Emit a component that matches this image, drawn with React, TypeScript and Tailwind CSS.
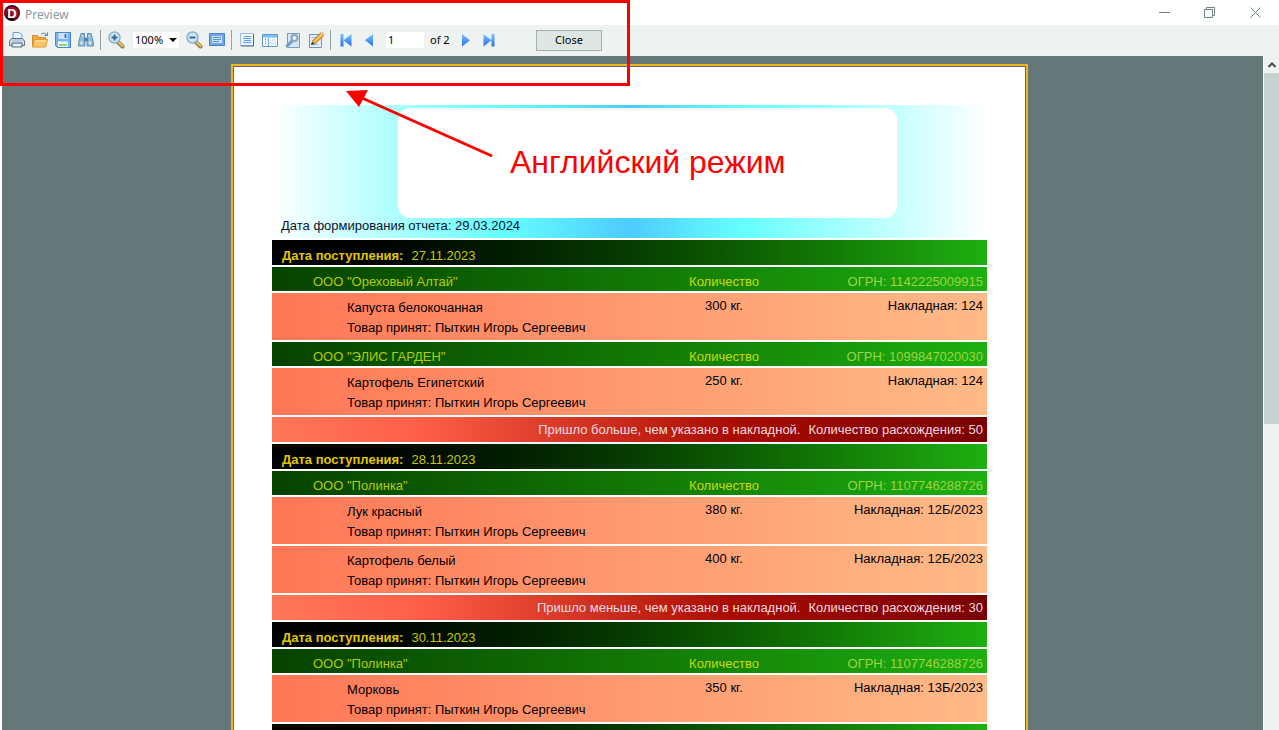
import React from 'react';

type Row =
    | { kind: 'date'; date: string }
    | { kind: 'org'; name: string; ogrn: string }
    | { kind: 'item'; name: string; qty: string; invoice: string }
    | { kind: 'diff'; text: string; count: number }
    | { kind: 'empty' };

const rows: Row[] = [
    { kind: 'date', date: '27.11.2023' },
    { kind: 'org', name: 'ООО "Ореховый Алтай"', ogrn: '1142225009915' },
    { kind: 'item', name: 'Капуста белокочанная', qty: '300 кг.', invoice: '124' },
    { kind: 'org', name: 'ООО "ЭЛИС ГАРДЕН"', ogrn: '1099847020030' },
    { kind: 'item', name: 'Картофель Египетский', qty: '250 кг.', invoice: '124' },
    { kind: 'diff', text: 'Пришло больше, чем указано в накладной.', count: 50 },
    { kind: 'date', date: '28.11.2023' },
    { kind: 'org', name: 'ООО "Полинка"', ogrn: '1107746288726' },
    { kind: 'item', name: 'Лук красный', qty: '380 кг.', invoice: '12Б/2023' },
    { kind: 'item', name: 'Картофель белый', qty: '400 кг.', invoice: '12Б/2023' },
    { kind: 'diff', text: 'Пришло меньше, чем указано в накладной.', count: 30 },
    { kind: 'date', date: '30.11.2023' },
    { kind: 'org', name: 'ООО "Полинка"', ogrn: '1107746288726' },
    { kind: 'item', name: 'Морковь', qty: '350 кг.', invoice: '13Б/2023' },
    { kind: 'empty' },
];

const Icon = ({ children }: { children: React.ReactNode }) => (
    <svg width="18" height="18" viewBox="0 0 18 18" fill="none" aria-hidden="true">
        {children}
    </svg>
);

const PrintIcon = () => (
    <Icon>
        <path d="M5 8V1.5h6.5L14 4v4z" fill="#e6f2ff" stroke="#6b9fe0" />
        <path d="M3.5 7.5h11l2 2.5v4.5h-15V10z" fill="#d3dbe0" stroke="#66767e" />
        <path d="M5 8h8l1 2.5H4z" fill="#a9c8ee" />
        <path d="M4 12h10v4H4z" fill="#c0e6fa" stroke="#5c6b73" />
        <path d="M5.5 14h7" stroke="#fff" />
    </Icon>
);

const OpenIcon = () => (
    <Icon>
        <path d="M1.5 15.5v-11h5l1.5 2h6.5v9z" fill="#f0ac40" stroke="#d08c2c" />
        <path d="M3.5 8.5h13l-2 7.5H1.5z" fill="#fdc665" stroke="#e09a30" />
        <path d="M4 10h11" stroke="#ffe6ae" />
        <path d="M10 3.5c2-2 4-1.5 5.500.5M16.500 1.500v3h-3" stroke="#56789a" />
    </Icon>
);

const SaveIcon = () => (
    <Icon>
        <path d="M1.500 1.500h15v15h-13l-2-2z" fill="#7ab4f6" stroke="#4a82d4" />
        <path d="M4.500 2h9v6h-9z" fill="#cfe4fd" />
        <path d="M11.500 3v4" stroke="#3a74cc" strokeWidth="2" />
        <path d="M4 10.500h10V16H4z" fill="#f2fff0" />
        <path d="M5 13h8v2H5z" fill="#86e06c" />
    </Icon>
);

const FindIcon = () => (
    <Icon>
        <path d="M4 2.500h3.500v4L8 15H1.500l.5-5z" fill="#8fbdd6" stroke="#5f8fae" />
        <path d="M14 2.500h-3.500v4L10 15h6.500l-.5-5z" fill="#8fbdd6" stroke="#5f8fae" />
        <path d="M7 6.500h4v4H7z" fill="#5585a6" />
        <path d="M3.500 10.500h2v3h-2zM12 10.500h2v3h-2z" fill="#d3ecf8" />
        <path d="M4.500 5h2M11.500 5h2" stroke="#d3ecf8" />
    </Icon>
);

const ZoomIcon = ({ plus }: { plus?: boolean }) => (
    <Icon>
        <path d="M11 11l4.500 4.500" stroke="#8c7d5c" strokeWidth="4" strokeLinecap="round" />
        <path d="M12 11.500l3.500 3.500" stroke="#f2c44e" strokeWidth="2" strokeLinecap="round" />
        <circle cx="7.500" cy="6.500" r="5.500" fill="#cfe9fb" stroke="#8fb0c8" strokeWidth="1.500" />
        <path d={plus ? 'M4.500 6.500h6M7.500 3.500v6' : 'M4.500 6.500h6'} stroke="#3a6598" strokeWidth="2" />
    </Icon>
);

const FullScreenIcon = () => (
    <Icon>
        <path d="M1.500 2.500h15v12h-15z" fill="#6ea6f0" stroke="#4a7fcc" />
        <path d="M4 5h10v7H4z" fill="#cde2fc" />
        <path d="M5 6.500h8M5 8.500h8M5 10.500h6" stroke="#5a8fd8" />
    </Icon>
);

const PageIcon = () => (
    <Icon>
        <path d="M2.500 2.500h13v12h-13z" fill="#f2f8ff" stroke="#9dbbe0" />
        <path d="M15.500 3v12H3" stroke="#4a6a98" />
        <path d="M6 5.500h7M5 7.500h8M6 9.500h7M5 11.500h8" stroke="#5b9bea" />
    </Icon>
);

const OutlineIcon = () => (
    <Icon>
        <path d="M1.500 3.500h15v12h-15z" fill="#f5faff" stroke="#5f9ccc" />
        <path d="M2 4h14v2.500H2z" fill="#74c0f2" />
        <path d="M7.500 7v8" stroke="#6fa9d6" />
        <path d="M4.500 8v6" stroke="#5a7d9a" strokeDasharray="1 1" />
        <path d="M9 8h6v6H9z" fill="#e1effb" />
    </Icon>
);

const SettingsIcon = () => (
    <Icon>
        <path d="M3.500 2.500h12v14h-12z" fill="#d3e4f5" stroke="#7d9dbd" />
        <path d="M3 15l5.500-5.500" stroke="#6a9dd0" strokeWidth="3" strokeLinecap="round" />
        <circle cx="10.500" cy="7" r="3" fill="#eef5fb" stroke="#8aa4bd" strokeWidth="2" />
    </Icon>
);

const EditIcon = () => (
    <Icon>
        <path d="M2.500 3.500h12v13h-12z" fill="#e2eefa" stroke="#7395b6" />
        <path d="M4.500 6.500h5M4.500 13.500h7" stroke="#9cc0e2" />
        <path d="M6.500 11.500l9-8.500" stroke="#b07a26" strokeWidth="4.500" />
        <path d="M7 11l8-7.500" stroke="#fbc248" strokeWidth="3" />
        <path d="M14.500 3.800L16.500 2" stroke="#f3b49a" strokeWidth="4" />
        <path d="M4 14l1-3.500 2.500 2.500z" fill="#3a2a14" />
    </Icon>
);

const navPaths = {
    first: 'M3.500 3h3v12.500h-3zM14.500 3v12.500L6.500 9.200z',
    prev: 'M13 3v12.500L5 9.200z',
    next: 'M5 3v12.500l8-6.300z',
    last: 'M11.500 3h3v12.500h-3zM3.500 3v12.500l8-6.300z',
};

const NavIcon = ({ dir }: { dir: keyof typeof navPaths }) => (
    <Icon>
        <defs>
            <linearGradient id={`nav-${dir}`} x1="0" y1="0" x2="0" y2="1">
                <stop offset="0" stopColor="#7cc0ff" />
                <stop offset="1" stopColor="#1f70f4" />
            </linearGradient>
        </defs>
        <path d={navPaths[dir]} fill={`url(#nav-${dir})`} />
    </Icon>
);

const ToolButton = ({ label, children }: { label: string; children: React.ReactNode }) => (
    <button aria-label={label} className="flex h-6 w-[23px] shrink-0 items-center justify-center hover:bg-[#d9e6ee]">
        {children}
    </button>
);

const Separator = () => <div className="mx-[3px] h-5 w-px shrink-0 bg-[#93a3a3]" />;

const TitleBar = () => (
    <header className="flex h-[25px] shrink-0 items-center bg-white pl-1">
        <svg width="16" height="16" viewBox="0 0 16 16" aria-hidden="true">
            <circle cx="8" cy="8" r="8" fill="#4a0714" />
            <circle cx="8" cy="8" r="6.500" fill="#a00f2c" />
            <path d="M2 12a8 8 0 0 0 9 3.400L4 4z" fill="#2a0309" />
            <text x="8" y="12.500" textAnchor="middle" fill="#fff" className="font-['Liberation_Sans',sans-serif] text-[13px] font-bold">D</text>
        </svg>
        <h1 className="ml-[5px] flex-1 pt-1 text-xs text-[#8b9a9c]">Preview</h1>
        <div className="flex text-[#6f8583]">
            <button aria-label="Minimize" className="flex h-6 w-[45px] items-center justify-center">
                <svg width="11" height="11" viewBox="0 0 11 11" stroke="currentColor"><path d="M0 5.500h11" /></svg>
            </button>
            <button aria-label="Restore" className="flex h-6 w-[45px] items-center justify-center">
                <svg width="11" height="11" viewBox="0 0 11 11" stroke="currentColor" fill="none"><path d="M.5 2.500h8v8h-8zM2.500 2.500v-2h8v8h-2" /></svg>
            </button>
            <button aria-label="Close window" className="flex h-6 w-[47px] items-center justify-center">
                <svg width="11" height="11" viewBox="0 0 11 11" stroke="currentColor"><path d="M.5.5l10 10M10.500.5l-10 10" /></svg>
            </button>
        </div>
    </header>
);

const Toolbar = () => (
    <div className="flex h-[31px] shrink-0 items-center bg-[#eef2f1] pb-px pl-[5px] text-[11px] text-black">
        <ToolButton label="Print"><PrintIcon /></ToolButton>
        <ToolButton label="Open"><OpenIcon /></ToolButton>
        <ToolButton label="Save"><SaveIcon /></ToolButton>
        <ToolButton label="Find"><FindIcon /></ToolButton>
        <Separator />
        <ToolButton label="Zoom in"><ZoomIcon plus /></ToolButton>
        <div className="relative mr-[3px] ml-[6px] flex h-4 w-[46px] shrink-0 items-center">
            <select aria-label="Zoom" className="h-4 w-full appearance-none bg-white pl-[2px] text-[11px] leading-4">
                <option>100%</option>
            </select>
            <svg width="8" height="4" viewBox="0 0 8 4" className="pointer-events-none absolute right-[2px]" aria-hidden="true">
                <path d="M0 0h8L4 4z" fill="#000" />
            </svg>
        </div>
        <ToolButton label="Zoom out"><ZoomIcon /></ToolButton>
        <ToolButton label="Full screen"><FullScreenIcon /></ToolButton>
        <Separator />
        <ToolButton label="Page"><PageIcon /></ToolButton>
        <ToolButton label="Outline"><OutlineIcon /></ToolButton>
        <ToolButton label="Page settings"><SettingsIcon /></ToolButton>
        <ToolButton label="Edit page"><EditIcon /></ToolButton>
        <Separator />
        <ToolButton label="First page"><NavIcon dir="first" /></ToolButton>
        <ToolButton label="Previous page"><NavIcon dir="prev" /></ToolButton>
        <input aria-label="Page number" defaultValue="1" className="ml-[6px] h-4 w-[38px] shrink-0 bg-white pl-[2px] outline-none" />
        <span className="ml-[6px] w-6 shrink-0 whitespace-nowrap">of 2</span>
        <ToolButton label="Next page"><NavIcon dir="next" /></ToolButton>
        <ToolButton label="Last page"><NavIcon dir="last" /></ToolButton>
        <button className="ml-9 h-[21px] w-[66px] shrink-0 border border-[#9fb0ae] bg-[#dfe7e5]">Close</button>
    </div>
);

const ReportRow = ({ row }: { row: Row }) => {
    if (row.kind === 'date') {
        return (
            <tr className="flex h-[25px] items-end bg-linear-to-r from-black via-[#063c00] to-[#1db010] pb-px pl-[10px] text-[#e0c800]">
                <th className="font-bold" scope="row">Дата поступления:</th>
                <td className="pl-2 text-[#c8c800]">{row.date}</td>
            </tr>
        );
    }
    if (row.kind === 'org') {
        return (
            <tr className="grid h-6 grid-cols-[1fr_160px_181px] items-end bg-linear-to-r from-[#074200] to-[#1db010] pr-1 pb-px text-[#b4cc00]">
                <td className="pl-[41px]">{row.name}</td>
                <td className="pl-1 text-center text-[#c8dc00]">Количество</td>
                <td className="text-right text-[#9cd444]">ОГРН: {row.ogrn}</td>
            </tr>
        );
    }
    if (row.kind === 'item') {
        return (
            <tr className="grid h-[47px] grid-cols-[1fr_160px_181px] bg-linear-to-r from-[#ff7656] to-[#ffba88] pr-1 text-black">
                <td className="flex flex-col gap-1 pt-[7px] pl-[75px]">
                    <span>{row.name}</span>
                    <span>Товар принят: Пыткин Игорь Сергеевич</span>
                </td>
                <td className="pt-[5px] pl-1 text-center">{row.qty}</td>
                <td className="pt-[5px] text-right">Накладная: {row.invoice}</td>
            </tr>
        );
    }
    if (row.kind === 'diff') {
        return (
            <tr className="flex h-[25px] items-center justify-end bg-[linear-gradient(to_right,#ff7858,#ff6048_20%,#a80c00_65%,#780000)] pr-1 text-[#f6d8e0]">
                <td>{row.text}</td>
                <td className="pl-2">Количество расхождения: {row.count}</td>
            </tr>
        );
    }
    return <tr className="block h-[25px] bg-linear-to-r from-black via-[#063c00] to-[#1db010]" />;
};

const ReportPage = () => (
    <article className="mx-auto mt-2 w-[797px] max-w-full border-2 border-[#f5b41c]">
        <div className="min-h-screen border border-[#5c6b6e] bg-white px-[38px] pt-[38px] font-['Liberation_Sans',Arial,sans-serif] text-[13px] leading-4">
            <div className="h-[133px] bg-[linear-gradient(to_right,#fff,#66ffff_32%,#4cccff_50%,#66ffff_66%,#fff)] pt-[3px]">
                <div className="mr-[90px] ml-[126px] h-[110px] rounded-xl bg-white" />
                <p className="pl-[9px] text-[#0c1030]">Дата формирования отчета: 29.03.2024</p>
            </div>
            <table className="mt-[2px] block">
                <tbody className="flex flex-col gap-[2px]">
                    {rows.map((row, i) => (
                        <ReportRow key={i} row={row} />
                    ))}
                </tbody>
            </table>
        </div>
    </article>
);

const ScrollBar = () => (
    <div className="flex w-4 shrink-0 flex-col border-l border-white bg-[#eef2f1]">
        <button aria-label="Scroll up" className="flex h-[17px] shrink-0 items-center justify-center">
            <svg width="8" height="6" viewBox="0 0 8 6" fill="none" stroke="#3f5052" strokeWidth="2" aria-hidden="true">
                <path d="M.5 5L4 1.500 7.500 5" />
            </svg>
        </button>
        <div className="flex-1">
            <div className="h-[53.4%] bg-[#c5d2d0]" />
        </div>
    </div>
);

// Red frame, arrow and caption drawn over the window
const Annotation = () => (
    <div className="pointer-events-none absolute inset-0 text-[#ff0000]">
        <div className="absolute top-0 left-0 h-[86px] w-[630px] border-3 border-current" />
        <svg className="absolute top-[86px] left-[340px]" width="160" height="80" viewBox="340 86 160 80" aria-hidden="true">
            <path d="M362 98L492 156" stroke="currentColor" strokeWidth="3" />
            <path d="M346 91l22-1-9 17z" fill="currentColor" />
        </svg>
        <p className="absolute top-[144px] left-[510px] font-['Liberation_Sans',Arial,sans-serif] text-[32px] leading-9 whitespace-nowrap">
            Английский режим
        </p>
    </div>
);

const App = () => {
    return (
        <div className="relative flex h-screen flex-col overflow-hidden bg-white font-['Noto_Sans',sans-serif]">
            <TitleBar />
            <Toolbar />
            <div className="flex min-h-0 flex-1 pl-[2px]">
                <main className="flex-1 overflow-hidden bg-[#66777a] pr-[6px]">
                    <ReportPage />
                </main>
                <ScrollBar />
            </div>
            <Annotation />
        </div>
    );
};

export default App;
